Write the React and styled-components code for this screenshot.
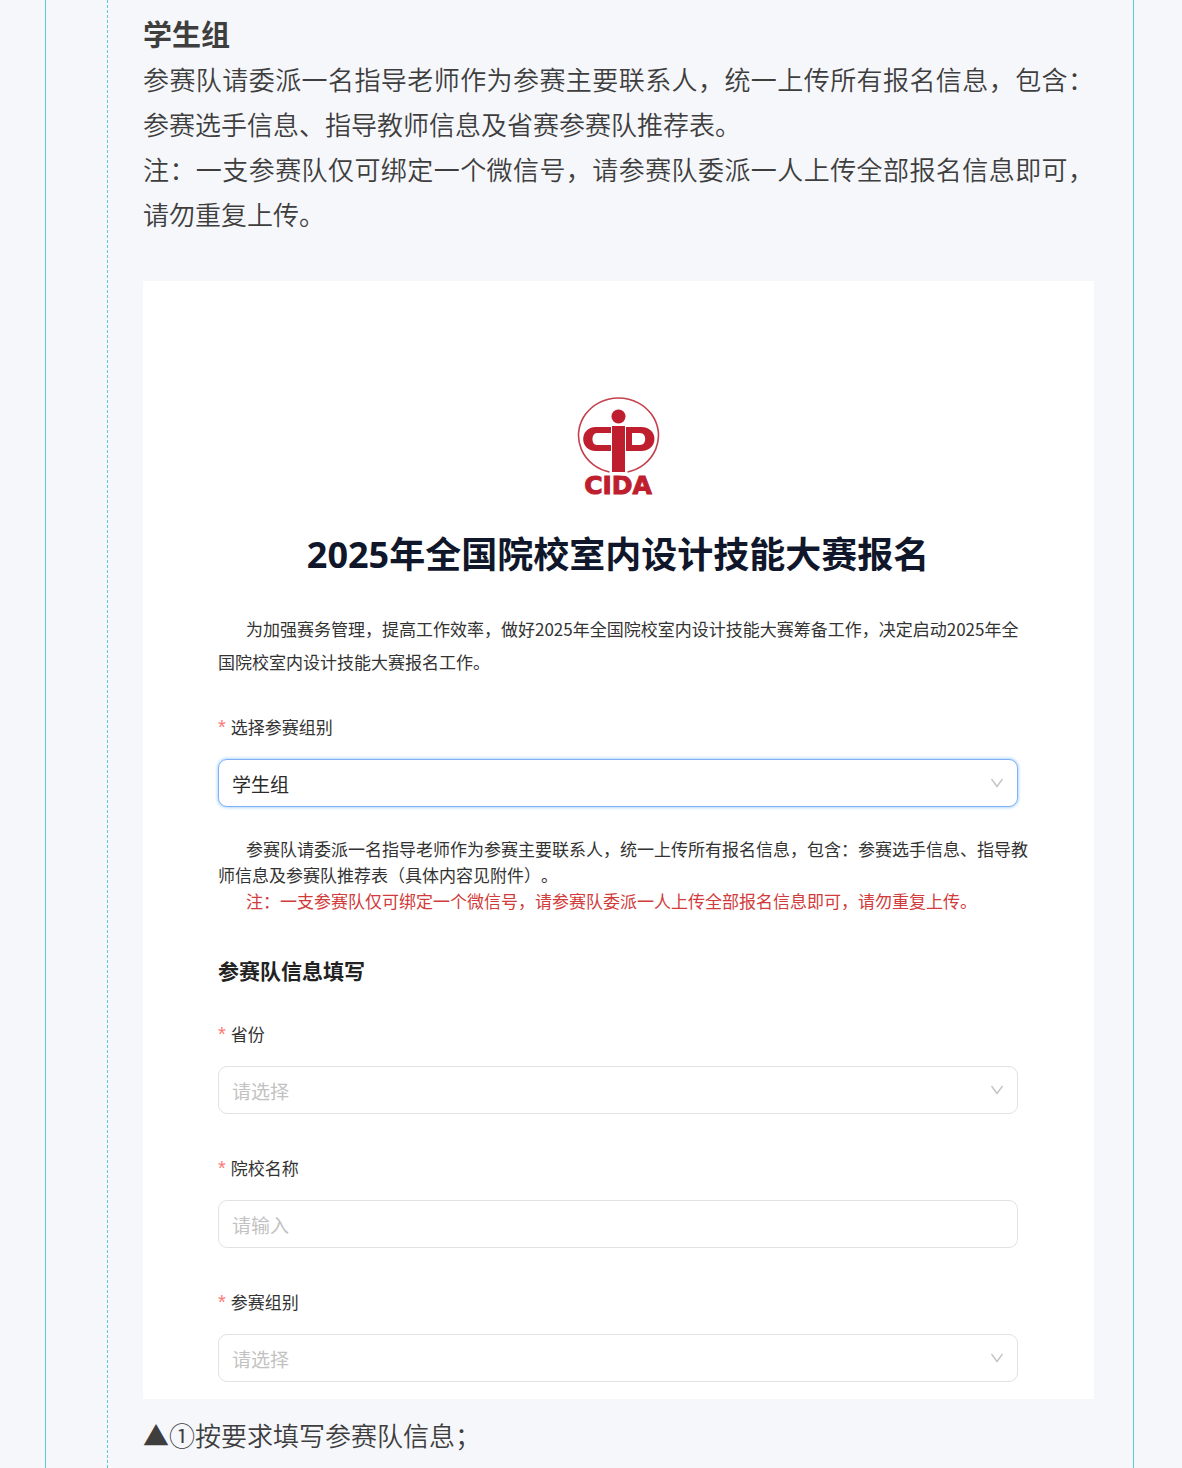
import { useState } from 'react';
import styled, { createGlobalStyle } from 'styled-components';

const GlobalStyle = createGlobalStyle`
  * {
    box-sizing: border-box;
  }

  body {
    margin: 0;
    background: #f6f7fb;
    color: #3e3e3e;
    font-family: 'Noto Sans CJK SC', sans-serif;
    text-spacing-trim: space-all;
  }
`;

const Frame = styled.main`
  margin: 0 48px 0 45px;
  padding-left: 61px;
  border-left: 1px solid #5fcbd0;
  border-right: 1px solid #5fcbd0;
`;

const Article = styled.article`
  min-height: 100vh;
  padding: 11px 39px 8px 35px;
  border-left: 1px dashed #5fcbd0;
`;

const GroupTitle = styled.h2`
  margin: 0;
  font-size: 29px;
  line-height: 45px;
  font-weight: bold;
`;

const Text = styled.p`
  margin: 0;
  font-size: 26px;
  line-height: 45px;
  font-weight: 350;
  text-align: justify;
`;

const Card = styled.section`
  margin: 45px 0 13px;
  padding: 116px 76px 17px 75px;
  background: white;
  color: #333;
`;

const LogoBox = styled.div`
  display: flex;
  flex-direction: column;
  align-items: center;

  svg {
    width: 84px;
    height: 80px;
  }
`;

const Wordmark = styled.span`
  color: #be1e2d;
  font-family: 'DejaVu Sans', sans-serif;
  font-size: 25px;
  line-height: 18px;
  font-weight: bold;
  -webkit-text-stroke: 1px #be1e2d;
`;

const FormTitle = styled.h1`
  margin: 36px 0 33px;
  color: #10172b;
  font-family: 'Open Sans', 'Noto Sans CJK SC', sans-serif;
  font-size: 36px;
  line-height: 48px;
  font-weight: bold;
  text-align: center;
`;

const Paragraph = styled.p`
  margin: 0 -12px 0 0;
  color: ${(props) => (props.$warning ? '#d13b3b' : 'inherit')};
  font-size: 17px;
  line-height: ${(props) => (props.$loose ? '33px' : '26px')};
  text-indent: 28px;
`;

const Notice = styled.div`
  margin-top: 29px;
`;

const SectionTitle = styled.h2`
  margin: 41px 0 36px;
  color: #222;
  font-size: 21px;
  line-height: 30px;
  font-weight: bold;
`;

const Field = styled.div`
  margin-top: ${(props) => (props.$first ? '37px' : '42px')};
`;

const Label = styled.label`
  display: flex;
  gap: 5px;
  margin-bottom: 20px;
  font-size: 17px;
  line-height: 24px;
`;

const Required = styled.span`
  color: #ff7875;
  font-family: 'Liberation Sans', sans-serif;
  font-size: 20px;
`;

const SelectBox = styled.div`
  display: grid;
  align-items: center;

  select,
  svg {
    grid-area: 1 / 1;
  }

  svg {
    justify-self: end;
    width: 14px;
    height: 10px;
    margin-right: 14px;
    pointer-events: none;
  }
`;

const Select = styled.select`
  appearance: none;
  width: 100%;
  height: 48px;
  padding: 0 13px;
  border: 1px solid ${(props) => (props.$active ? '#7fb2f5' : '#e2e2e2')};
  border-radius: 9px;
  outline: none;
  background: white;
  box-shadow: ${(props) => (props.$active ? '0 0 3px 1px #b5d7fb' : 'none')};
  color: ${(props) => (props.$empty ? '#c2c2c2' : '#2b2b2b')};
  font-family: inherit;
  font-size: 19px;
`;

const Input = styled.input`
  display: block;
  width: 100%;
  height: 48px;
  padding: 0 13px;
  border: 1px solid #e2e2e2;
  border-radius: 9px;
  outline: none;
  color: #2b2b2b;
  font-family: inherit;
  font-size: 19px;

  &::placeholder {
    color: #c2c2c2;
  }
`;

const Logo = () => (
  <LogoBox>
    <svg viewBox="0 0 84 80" aria-hidden="true">
      <path
        d="M33.5 75 A40 37.5 0 1 1 51.5 75"
        fill="none"
        stroke="#c4404c"
        strokeWidth="1.6"
      />
      <circle cx="42.5" cy="19.5" r="7" fill="#be1e2d" />
      <path
        d="M35 30 H20 C3 30 3 54 20 54 H35 V48 H21 C15 48 15 36 21 36 H35 Z"
        fill="#be1e2d"
      />
      <path
        d="M50 30 H65 C83 30 83 54 65 54 H50 Z M56 36 V48 H64 C71 48 71 36 64 36 Z"
        fill="#be1e2d"
        fillRule="evenodd"
      />
      <rect x="36" y="29" width="13" height="46" fill="#be1e2d" />
    </svg>
    <Wordmark>CIDA</Wordmark>
  </LogoBox>
);

const SelectField = ({ id, label, options, initial = '', first, active }) => {
  const [value, setValue] = useState(initial);

  return (
    <Field $first={first}>
      <Label htmlFor={id}>
        <Required>*</Required>
        {label}
      </Label>
      <SelectBox>
        <Select
          id={id}
          value={value}
          onChange={(e) => setValue(e.target.value)}
          $active={active}
          $empty={!value}
        >
          <option value="">请选择</option>
          {options.map((option) => (
            <option key={option} value={option}>
              {option}
            </option>
          ))}
        </Select>
        <svg viewBox="0 0 14 10" fill="none" stroke="#c4c4c4" strokeWidth="1.4">
          <path d="M1.5 1 L7 8.5 L12.5 1" />
        </svg>
      </SelectBox>
    </Field>
  );
};

const App = () => {
  const [school, setSchool] = useState('');

  return (
    <>
      <GlobalStyle />
      <Frame>
        <Article lang="zh-CN">
          <GroupTitle>学生组</GroupTitle>
          <Text>
            参赛队请委派一名指导老师作为参赛主要联系人，统一上传所有报名信息，包含：参赛选手信息、指导教师信息及省赛参赛队推荐表。
          </Text>
          <Text>
            注：一支参赛队仅可绑定一个微信号，请参赛队委派一人上传全部报名信息即可，请勿重复上传。
          </Text>
          <Card>
            <Logo />
            <FormTitle>2025年全国院校室内设计技能大赛报名</FormTitle>
            <Paragraph $loose>
              为加强赛务管理，提高工作效率，做好2025年全国院校室内设计技能大赛筹备工作，决定启动2025年全国院校室内设计技能大赛报名工作。
            </Paragraph>
            <SelectField
              id="group"
              label="选择参赛组别"
              options={['学生组']}
              initial="学生组"
              first
              active
            />
            <Notice>
              <Paragraph>
                参赛队请委派一名指导老师作为参赛主要联系人，统一上传所有报名信息，包含：参赛选手信息、指导教师信息及参赛队推荐表（具体内容见附件）。
              </Paragraph>
              <Paragraph $warning>
                注：一支参赛队仅可绑定一个微信号，请参赛队委派一人上传全部报名信息即可，请勿重复上传。
              </Paragraph>
            </Notice>
            <SectionTitle>参赛队信息填写</SectionTitle>
            <SelectField id="province" label="省份" options={[]} first />
            <Field>
              <Label htmlFor="school">
                <Required>*</Required>
                院校名称
              </Label>
              <Input
                id="school"
                placeholder="请输入"
                value={school}
                onChange={(e) => setSchool(e.target.value)}
              />
            </Field>
            <SelectField id="category" label="参赛组别" options={[]} />
          </Card>
          <Text>▲①按要求填写参赛队信息；</Text>
        </Article>
      </Frame>
    </>
  );
};

export default App;
